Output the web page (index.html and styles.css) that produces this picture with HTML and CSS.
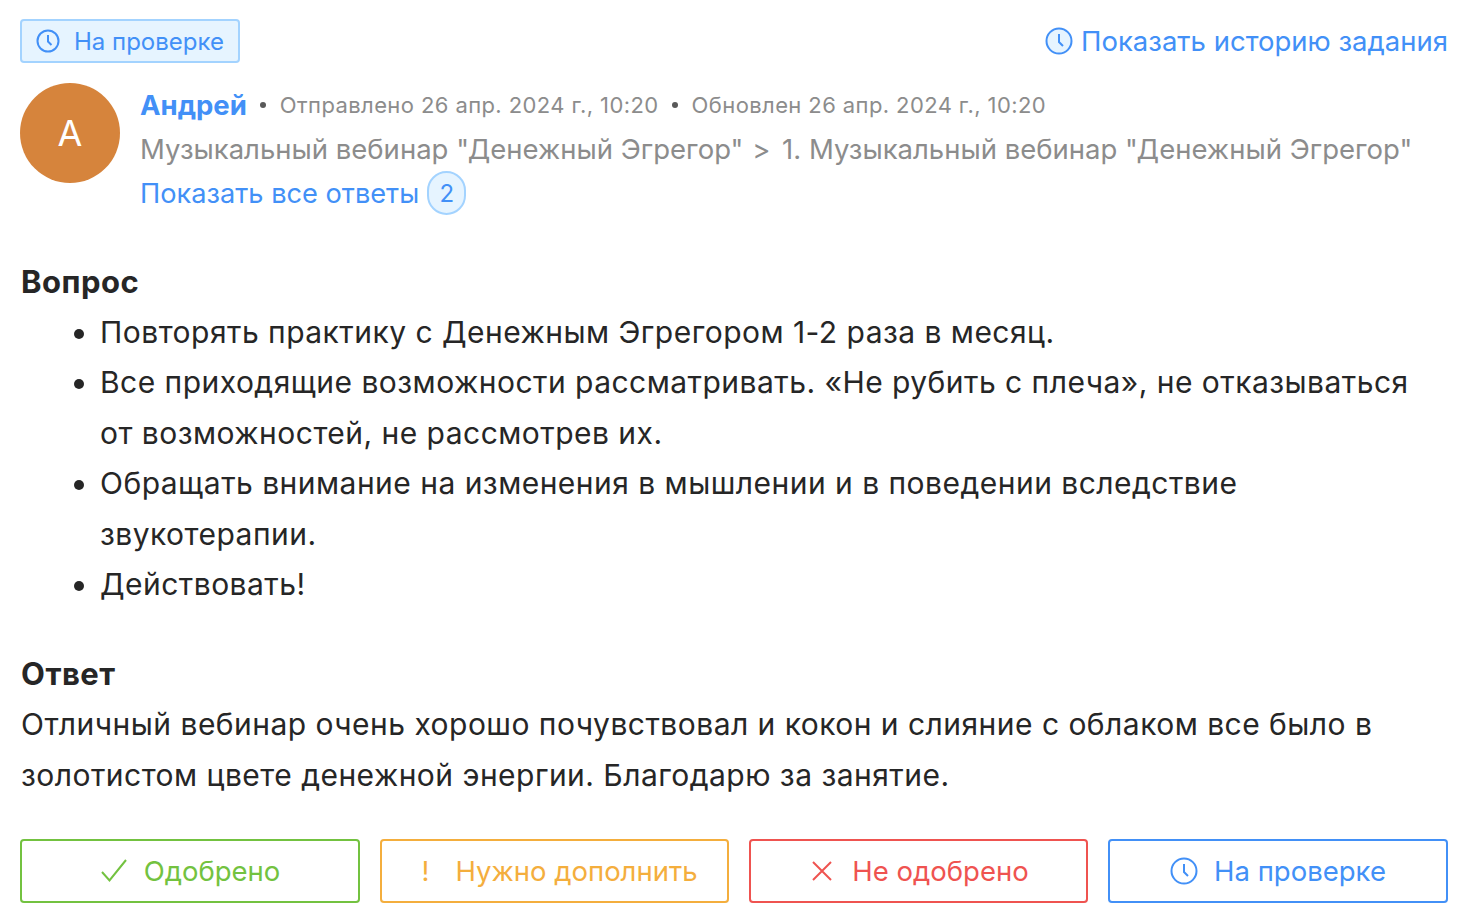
FILE: index.html
```html
<!DOCTYPE html>
<html lang="ru">
<head>
  <title>Ответ на задание</title>
  <meta charset="UTF-8">
  <meta name="viewport" content="width=device-width, initial-scale=1">
  <link rel="stylesheet" href="styles.css">
</head>
<body>
  <div class="card">
    <div class="top">
      <span class="status">
        <svg class="icon-status" viewBox="0 0 24 24"><circle cx="12" cy="12" r="10.5"/><path d="M12 6v6.5l3.5 3.5"/></svg>
        На проверке
      </span>
      <a class="history" href="#">
        <svg class="icon-history" viewBox="0 0 28 28"><circle cx="14" cy="14" r="12.5"/><path d="M14 7v8l4 4"/></svg>
        Показать историю задания
      </a>
    </div>

    <div class="author">
      <div class="avatar">A</div>
      <div class="info">
        <div class="meta">
          <a class="name" href="#">Андрей</a>
          <span class="dot"></span>
          <span>Отправлено 26 апр. 2024 г., 10:20</span>
          <span class="dot"></span>
          <span>Обновлен 26 апр. 2024 г., 10:20</span>
        </div>
        <div class="path">Музыкальный вебинар "Денежный Эгрегор" <span class="sep">&gt;</span> 1. Музыкальный вебинар "Денежный Эгрегор"</div>
        <div class="answers">
          <a href="#">Показать все ответы</a>
          <span class="count">2</span>
        </div>
      </div>
    </div>

    <div class="block question">
      <h3>Вопрос</h3>
      <ul>
        <li>Повторять практику с Денежным Эгрегором 1-2 раза в месяц.</li>
        <li>Все приходящие возможности рассматривать. «Не рубить с плеча», не отказываться от возможностей, не рассмотрев их.</li>
        <li>Обращать внимание на изменения в мышлении и в поведении вследствие звукотерапии.</li>
        <li>Действовать!</li>
      </ul>
    </div>

    <div class="block reply">
      <h3>Ответ</h3>
      <p>Отличный вебинар очень хорошо почувствовал и кокон и слияние с облаком все было в золотистом цвете денежной энергии. Благодарю за занятие.</p>
    </div>

    <div class="actions">
      <button class="btn btn-ok">
        <svg viewBox="0 0 28 28"><path d="M2 15l7.500 8.500L26 3"/></svg>
        Одобрено
      </button>
      <button class="btn btn-more">
        <span class="mark">!</span>
        Нужно дополнить
      </button>
      <button class="btn btn-no">
        <svg viewBox="0 0 28 28"><path d="M5 5l18 18M23 5L5 23"/></svg>
        Не одобрено
      </button>
      <button class="btn btn-check">
        <svg viewBox="0 0 28 28"><circle cx="14" cy="14" r="12.500"/><path d="M14 7v8l4 4"/></svg>
        На проверке
      </button>
    </div>
  </div>
</body>
</html>
```

FILE: styles.css
```css
body {
  margin: 0;
  background: #fff;
  font-family: Inter, "Noto Sans", sans-serif;
  color: #262626;
  font-size: 27.500px;
}

a {
  color: #4290f7;
  text-decoration: none;
}

.card {
  padding: 19px 18px 0 20px;
}

/* Top row */
.top {
  display: flex;
  justify-content: space-between;
  align-items: center;
}

.status {
  display: flex;
  align-items: center;
  gap: 14px;
  height: 40px;
  padding: 0 14px;
  border: 2px solid #a3d3ff;
  border-radius: 4px;
  background: #e6f4ff;
  color: #4290f7;
  font-size: 24px;
}

.icon-status {
  width: 24px;
  height: 24px;
  fill: none;
  stroke: #4290f7;
  stroke-width: 2;
}

.history {
  display: flex;
  align-items: center;
  gap: 8px;
}

.icon-history {
  width: 28px;
  height: 28px;
  fill: #e6f4ff;
  stroke: #4290f7;
  stroke-width: 2;
}

/* Author */
.author {
  display: flex;
  gap: 20px;
  margin-top: 20px;
}

.avatar {
  display: flex;
  align-items: center;
  justify-content: center;
  width: 100px;
  height: 100px;
  border-radius: 50%;
  background: #d6843c;
  color: #fff;
  font-size: 36px;
}

.meta {
  display: flex;
  align-items: center;
  gap: 13.500px;
  height: 44px;
  color: #8c8c8c;
  font-size: 22px;
  letter-spacing: 0.4px;
}

.name {
  font-size: 27.500px;
  font-weight: 700;
  letter-spacing: 0;
}

.dot {
  width: 6px;
  height: 6px;
  border-radius: 50%;
  background: #595959;
}

.path {
  color: #8c8c8c;
  line-height: 44px;
}

.sep {
  margin: 0 4px 0 1px;
}

.answers {
  display: flex;
  align-items: center;
  gap: 8px;
  height: 44px;
  font-size: 27.200px;
}

.count {
  display: flex;
  align-items: center;
  justify-content: center;
  width: 35px;
  height: 40px;
  border: 2px solid #a3d3ff;
  border-radius: 20px;
  background: #e6f4ff;
  color: #4290f7;
  font-size: 24px;
}

/* Question and answer */
.block {
  font-size: 30px;
  letter-spacing: 0.47px;
}

.block h3 {
  margin: 0;
  padding-left: 1px;
  font-size: 31px;
  font-weight: 700;
  letter-spacing: 0.5px;
  line-height: 50px;
}

.question {
  margin-top: 42px;
}

.question ul {
  margin: 0;
  padding-left: 80px;
}

.question li {
  line-height: 50.400px;
}

.reply {
  margin-top: 40px;
}

.reply p {
  margin: 0;
  padding-left: 1px;
  line-height: 50.400px;
}

/* Buttons */
.actions {
  display: grid;
  grid-template-columns: 340px 349px 339px 340px;
  gap: 20px;
  margin-top: 39px;
}

.btn {
  display: flex;
  align-items: center;
  justify-content: center;
  gap: 16px;
  height: 64px;
  border: 2px solid;
  border-radius: 4px;
  background: #fff;
  font-family: inherit;
  font-size: 27.500px;
  color: inherit;
  box-shadow: 0 2px 0 rgba(0, 0, 0, 0.02);
}

.btn svg {
  width: 28px;
  height: 28px;
  fill: none;
  stroke: currentColor;
  stroke-width: 2;
}

.btn-ok {
  border-color: #73c240;
  color: #73c240;
}

.btn-more {
  border-color: #f4ae3d;
  color: #f4ae3d;
}

.btn-no {
  border-color: #ef5350;
  color: #ef5350;
}

.btn-check {
  border-color: #4290f7;
  color: #4290f7;
}

.mark {
  width: 28px;
  text-align: center;
}
```
